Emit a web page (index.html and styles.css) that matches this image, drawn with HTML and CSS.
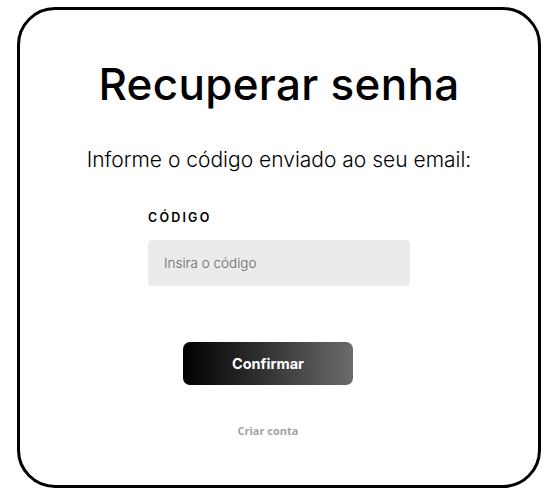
FILE: index.html
```html
<!DOCTYPE html>
<html lang="pt-BR">
<head>
<meta charset="utf-8">
<title>Recuperar senha</title>
<link rel="stylesheet" href="styles.css">
</head>
<body>
<main class="card">
  <h1 class="title">Recuperar senha</h1>
  <p class="subtitle">Informe o código enviado ao seu email:</p>
  <form class="form">
    <label class="label" for="code">CÓDIGO</label>
    <input class="input" id="code" type="text" placeholder="Insira o código">
    <button class="btn" type="button">Confirmar</button>
  </form>
  <a class="link" href="#">Criar conta</a>
</main>
</body>
</html>
```
FILE: styles.css
```css
* { box-sizing: border-box; }
html, body { margin: 0; background: #fff; }
body {
  padding: 7px 16px 0 17px;
  font-family: Inter, "Noto Sans", sans-serif;
  color: #000;
}
.card {
  width: 524px;
  height: 481px;
  border: 3px solid #000;
  border-radius: 38px;
  display: flex;
  flex-direction: column;
  align-items: center;
  padding-top: 44px;
}
.title {
  margin: 0;
  font-size: 44px;
  font-weight: 500;
  line-height: 60px;
  letter-spacing: 0.3px;
}
.subtitle {
  margin: 32px 0 0;
  font-size: 21px;
  font-weight: 300;
  line-height: 28px;
}
.form {
  width: 262px;
  display: flex;
  flex-direction: column;
  align-items: flex-start;
  margin-top: 36px;
}
.label {
  font-size: 12.5px;
  font-weight: 600;
  letter-spacing: 2.2px;
  line-height: 16px;
}
.input {
  margin-top: 14px;
  width: 262px;
  height: 46px;
  border: none;
  border-radius: 4px;
  background: #ebebeb;
  padding: 0 16px;
  font-family: inherit;
  font-size: 13.5px;
  font-weight: 300;
  color: #333;
  outline: none;
}
.input::placeholder { color: #666; }
.btn {
  align-self: center;
  margin: 56px 22px 0 0;
  width: 170px;
  height: 43px;
  border: none;
  border-radius: 7px;
  background: linear-gradient(90deg, #000 0%, #2a2a2a 40%, #6b6b6b 100%);
  color: #fff;
  font-family: inherit;
  font-size: 14.5px;
  font-weight: 700;
  cursor: pointer;
}
.link {
  margin: 38px 22px 0 0;
  font-family: "Open Sans", sans-serif;
  font-size: 11px;
  font-weight: 700;
  color: #a3a3a3;
  text-decoration: none;
}
```
